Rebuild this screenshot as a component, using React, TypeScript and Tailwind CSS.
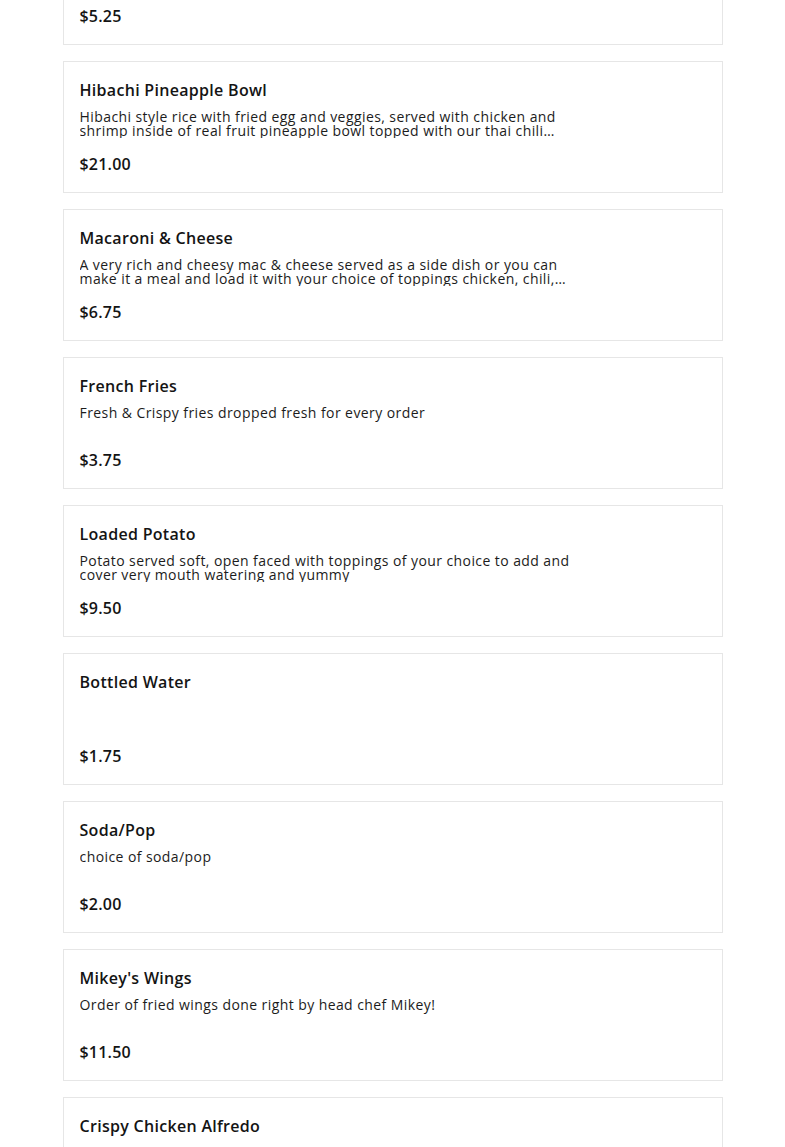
const items = [
  { name: "Egg Rolls", desc: "Crispy golden egg rolls stuffed with cabbage, carrots and seasoned pork, served with sweet chili sauce", price: "$5.25" },
  { name: "Hibachi Pineapple Bowl", desc: "Hibachi style rice with fried egg and veggies, served with chicken and shrimp inside of real fruit pineapple bowl topped with our thai chili sauce and green onions", price: "$21.00" },
  { name: "Macaroni & Cheese", desc: "A very rich and cheesy mac & cheese served as a side dish or you can make it a meal and load it with your choice of toppings chicken, chili, bacon and more", price: "$6.75" },
  { name: "French Fries", desc: "Fresh & Crispy fries dropped fresh for every order", price: "$3.75" },
  { name: "Loaded Potato", desc: "Potato served soft, open faced with toppings of your choice to add and cover very mouth watering and yummy", price: "$9.50" },
  { name: "Bottled Water", desc: "", price: "$1.75" },
  { name: "Soda/Pop", desc: "choice of soda/pop", price: "$2.00" },
  { name: "Mikey's Wings", desc: "Order of fried wings done right by head chef Mikey!", price: "$11.50" },
  { name: "Crispy Chicken Alfredo", desc: "Fettuccine pasta tossed in our creamy homemade alfredo sauce topped with crispy fried chicken and parmesan", price: "$16.00" },
];

function MenuCard({ name, desc, price }: { name: string; desc: string; price: string }) {
  return (
    <article className="border border-[#e6e6e6] bg-white px-4 py-4">
      <h3 className="text-[16px] leading-6 font-semibold tracking-[0.3px] text-[#141414]">{name}</h3>
      <p className="mt-2 h-[28px] w-[492px] text-[14px] leading-[14px] tracking-[0.42px] text-[#1c1c1c] line-clamp-2">{desc}</p>
      <div className="mt-[14px] text-[16px] leading-6 font-semibold tracking-[0.2px] text-[#141414]">{price}</div>
    </article>
  );
}

export default function App() {
  return (
    <div className="min-h-screen bg-white font-['Open_Sans',sans-serif] overflow-hidden">
      <div className="mx-auto -mt-[87px] flex w-[660px] flex-col gap-4">
        {items.map((it) => (
          <MenuCard key={it.name} {...it} />
        ))}
      </div>
    </div>
  );
}
